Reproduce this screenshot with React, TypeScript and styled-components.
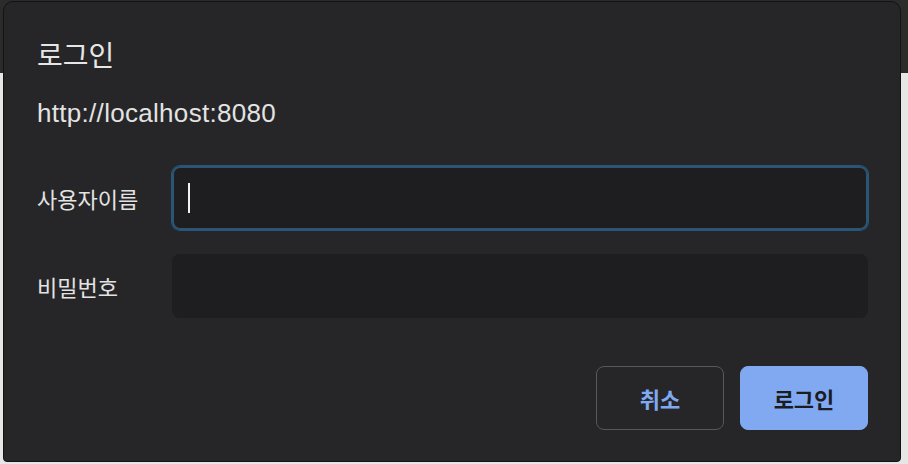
import React from "react";
import styled, { createGlobalStyle } from "styled-components";

const Global = createGlobalStyle`
  html, body { margin: 0; padding: 0; }
  body {
    width: 908px;
    height: 464px;
    overflow: hidden;
    background: linear-gradient(#2b2b2b 0 73px, #e6e6e6 73px);
    font-family: "Liberation Sans", "Noto Sans CJK KR", sans-serif;
  }
`;

const Page = styled.div`
  display: flex;
  padding: 1px 0 0 3px;
  box-sizing: border-box;
  height: 464px;
`;

const Dialog = styled.div`
  width: 898px;
  height: 461px;
  box-sizing: border-box;
  background: #262628;
  border: 1px solid #131314;
  border-radius: 10px 10px 4px 4px;
  padding: 36px 32px 0 33px;
  display: flex;
  flex-direction: column;
  color: #e3e3e3;
`;

const Title = styled.h1`
  margin: 0;
  font-family: "Noto Sans CJK KR", sans-serif;
  font-weight: 400;
  font-size: 28px;
  line-height: 32px;
  color: #e6e6e6;
`;

const Origin = styled.div`
  margin-top: 27px;
  font-size: 26px;
  letter-spacing: 0.3px;
  line-height: 32px;
  color: #e3e3e3;
`;

const Form = styled.div`
  margin-top: 37px;
  display: grid;
  grid-template-columns: 135px 696px;
  row-gap: 24px;
  align-items: center;
`;

const Label = styled.label`
  font-family: "Noto Sans CJK KR", sans-serif;
  font-size: 22px;
  color: #e3e3e3;
`;

const Field = styled.div<{ $focused?: boolean }>`
  height: 64px;
  box-sizing: border-box;
  border-radius: 8px;
  background: #1e1e20;
  display: flex;
  align-items: center;
  padding-left: 16px;
  box-shadow: ${(p) =>
    p.$focused ? "0 0 0 1px #2b5576, inset 0 0 0 2px #2b5576" : "none"};
`;

const Caret = styled.span`
  width: 2px;
  height: 30px;
  background: #f2f2f2;
`;

const Actions = styled.div`
  margin-top: 48px;
  display: flex;
  justify-content: flex-end;
  gap: 16px;
`;

const Button = styled.button<{ $primary?: boolean }>`
  width: 128px;
  height: 64px;
  box-sizing: border-box;
  border-radius: 8px;
  font-family: "Noto Sans CJK KR", sans-serif;
  font-size: 22px;
  font-weight: 600;
  cursor: pointer;
  border: 1px solid ${(p) => (p.$primary ? "#80a9f2" : "#58585c")};
  background: ${(p) => (p.$primary ? "#80a9f2" : "transparent")};
  color: ${(p) => (p.$primary ? "#1b1c1f" : "#80a9f2")};
`;

export default function App() {
  return (
    <>
      <Global />
      <Page>
        <Dialog>
          <Title>로그인</Title>
          <Origin>http://localhost:8080</Origin>
          <Form>
            <Label>사용자이름</Label>
            <Field $focused>
              <Caret />
            </Field>
            <Label>비밀번호</Label>
            <Field />
          </Form>
          <Actions>
            <Button>취소</Button>
            <Button $primary>로그인</Button>
          </Actions>
        </Dialog>
      </Page>
    </>
  );
}
